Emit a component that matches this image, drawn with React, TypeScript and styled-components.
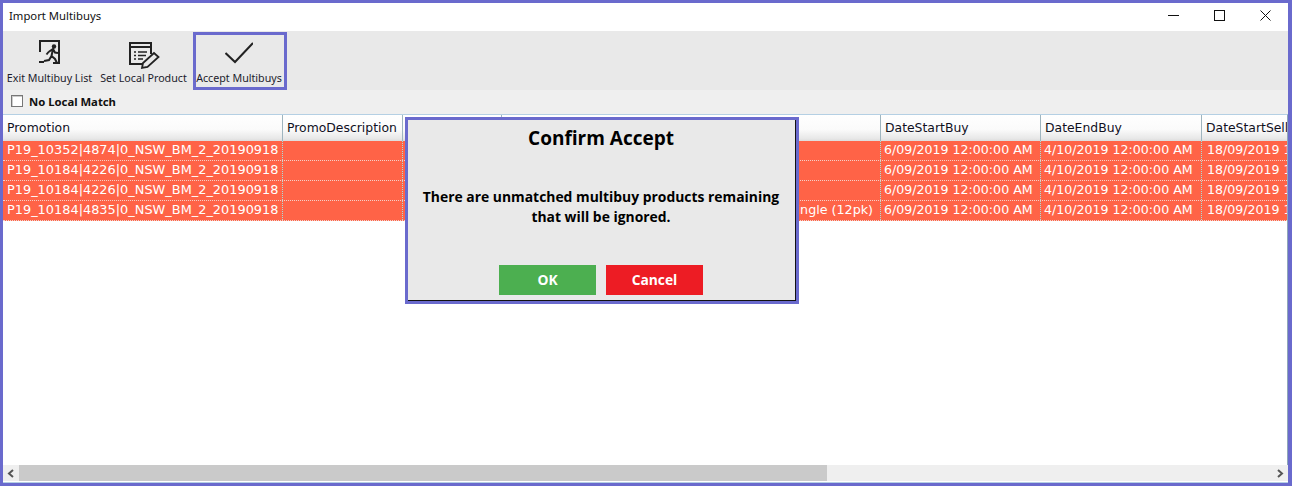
import React from "react";
import styled, { createGlobalStyle } from "styled-components";

const Global = createGlobalStyle`
  html, body { margin: 0; padding: 0; background: #fff; }
  * { box-sizing: border-box; }
`;

const Frame = styled.div`
  position: relative;
  width: 1292px;
  height: 486px;
  border: solid #6a6acd;
  border-width: 3px 4px 3px 3px;
  display: flex;
  flex-direction: column;
  background: #fff;
  overflow: hidden;
  font-family: "Noto Sans", "Open Sans", sans-serif;
`;

const TitleBar = styled.div`
  height: 28px;
  flex: none;
  display: flex;
  align-items: flex-start;
  justify-content: space-between;
  padding-left: 6px;
  font-size: 11.3px;
  line-height: 26px;
  color: #111;
`;

const WindowControls = styled.div`
  display: flex;
  align-items: center;
`;

const ControlButton = styled.div`
  width: 46px;
  height: 25px;
  display: flex;
  align-items: center;
  justify-content: center;
`;

const Toolbar = styled.div`
  height: 59px;
  flex: none;
  background: #e9e9e9;
  display: flex;
  padding-left: 2px;
`;

const ToolButton = styled.div<{ $active?: boolean; $width: number }>`
  width: ${(p) => p.$width}px;
  margin-top: 1px;
  height: 58px;
  border: 3px solid ${(p) => (p.$active ? "#6a6acd" : "transparent")};
  display: flex;
  flex-direction: column;
  align-items: center;
  padding: 5px ${(p) => (p.$active ? 2 : 0)}px 0 0;
  font-size: 10.7px;
  color: #1c1c2c;
  white-space: nowrap;
`;

const IconSlot = styled.div`
  height: 31px;
  display: flex;
  align-items: flex-start;
  justify-content: center;
`;

const ToolLabel = styled.span`
  line-height: 14px;
`;

const OptionRow = styled.div`
  height: 24px;
  flex: none;
  background: #efefef;
  display: flex;
  align-items: center;
  gap: 6px;
  padding: 0 0 2px 8px;
  font-size: 11.3px;
  font-weight: 700;
  color: #111;
`;

const Check = styled.span`
  width: 12px;
  height: 12px;
  background: #fff;
  border: 1px solid #777;
  box-shadow: inset 1px 1px 0 #ccc;
`;

const Grid = styled.div`
  flex: 1;
  min-height: 0;
  overflow: hidden;
  border-top: 1px solid #b5d0e4;
  border-right: 1px solid #8fa7b8;
  font-family: "DejaVu Sans", Verdana, sans-serif;
  font-size: 12.4px;
`;

const HeaderRow = styled.div`
  display: flex;
  height: 26px;
  background: linear-gradient(#ffffff 0%, #fbfbfb 55%, #e8e8e8 90%, #dcdcdc 100%);
  color: #10101e;
  align-items: stretch;
`;

const HeaderCell = styled.div<{ $w: number }>`
  flex: none;
  width: ${(p) => p.$w}px;
  padding: 0 0 2px 4px;
  display: flex;
  align-items: center;
  white-space: nowrap;
  overflow: hidden;
  border-right: 1px solid #9fb5bf;
`;

const DataRow = styled.div`
  display: flex;
  height: 20px;
  background: #ff6347;
  color: #fff;
  border-bottom: 1px dotted #f4d0c8;
`;

const DataCell = styled.div<{ $w: number; $pad?: number; $end?: boolean; $size?: number }>`
  flex: none;
  width: ${(p) => p.$w}px;
  padding-left: ${(p) => p.$pad ?? 3}px;
  padding-right: ${(p) => (p.$end ? 7 : 0)}px;
  text-align: ${(p) => (p.$end ? "right" : "left")};
  font-size: ${(p) => p.$size ?? 12.6}px;
  line-height: 18px;
  white-space: nowrap;
  overflow: hidden;
  border-right: 1px dotted #a9dcd8;
`;

const ScrollBar = styled.div`
  height: 16px;
  flex: none;
  background: #efefef;
  display: flex;
  align-items: stretch;
  margin-bottom: 1px;
`;

const ScrollArrow = styled.div`
  width: 16px;
  flex: none;
  display: flex;
  align-items: center;
  justify-content: center;
`;

const ScrollThumb = styled.div`
  width: 808px;
  flex: none;
  background: #cacaca;
`;

const ScrollGap = styled.div`
  flex: 1;
`;

const BottomLine = styled.div`
  height: 1px;
  flex: none;
  background: #b5d0e4;
`;

const Dialog = styled.div`
  position: absolute;
  left: 402px;
  top: 114px;
  width: 394px;
  height: 187px;
  padding-right: 2px;
  border: 3px solid #6a6acd;
  background: #e9e9e9;
  box-shadow: inset -1px -1px 0 #111;
  display: flex;
  flex-direction: column;
  align-items: center;
  font-family: "Open Sans", "Noto Sans", sans-serif;
  font-weight: 700;
  color: #000;
`;

const DialogTitle = styled.div`
  margin-top: 6px;
  font-size: 19px;
  line-height: 25px;
`;

const DialogText = styled.div`
  margin-top: 36px;
  font-size: 13.9px;
  line-height: 20px;
  text-align: center;
`;

const DialogButtons = styled.div`
  margin-top: auto;
  margin-bottom: 6px;
  display: flex;
  gap: 10px;
`;

const DialogButton = styled.div<{ $bg: string }>`
  width: 97px;
  height: 30px;
  background: ${(p) => p.$bg};
  color: #fff;
  font-size: 13.8px;
  display: flex;
  align-items: center;
  justify-content: center;
  padding-bottom: 1px;
`;

const columns = [280, 120, 99, 379, 160, 161, 86];
const headers = ["Promotion", "PromoDescription", "", "", "DateStartBuy", "DateEndBuy", "DateStartSell"];
const rows = [
  "P19_10352|4874|0_NSW_BM_2_20190918",
  "P19_10184|4226|0_NSW_BM_2_20190918",
  "P19_10184|4226|0_NSW_BM_2_20190918",
  "P19_10184|4835|0_NSW_BM_2_20190918",
];

const ExitIcon = () => (
  <svg width="22" height="30" viewBox="0 0 22 30" fill="none" stroke="#222">
    <path d="M1 12V1h19v22h-6M0 22h5" strokeWidth="2" />
    <circle cx="15" cy="6.500" r="2.200" fill="#222" stroke="none" />
    <path d="M9.500 12l4.500-3-1.500 7 3.500 3 2 4M12.500 16l-2.500 4-5 1M14 9l2 3.500 3 .5M9.500 12l-2 2.500" strokeWidth="2" />
  </svg>
);

const ProductIcon = () => (
  <svg width="32" height="30" viewBox="0 0 32 30" fill="none" stroke="#222">
    <path d="M23 14V3H2v21h12M2 7h21" strokeWidth="2" />
    <path d="M6 12h2M10 12h9M6 15.500h2M10 15.500h8M6 19h2M10 19h5" strokeWidth="1.500" />
    <path d="M14 28l1-5 11-10 4.500 4-11 10z" strokeWidth="1.800" />
  </svg>
);

const CheckIcon = () => (
  <svg width="28" height="30" viewBox="0 0 28 30" fill="none" stroke="#222" strokeWidth="2">
    <path d="M.5 13l9.500 9L28 3" />
  </svg>
);

export default function App() {
  return (
    <Frame>
      <Global />
      <TitleBar>
        Import Multibuys
        <WindowControls>
          <ControlButton>
            <svg width="11" height="11" viewBox="0 0 11 11" stroke="#111"><path d="M0 5.500h11" /></svg>
          </ControlButton>
          <ControlButton>
            <svg width="11" height="11" viewBox="0 0 11 11" fill="none" stroke="#111"><rect x=".5" y=".5" width="10" height="10" /></svg>
          </ControlButton>
          <ControlButton>
            <svg width="11" height="11" viewBox="0 0 11 11" stroke="#111"><path d="M.5.500l10 10M10.500.500l-10 10" /></svg>
          </ControlButton>
        </WindowControls>
      </TitleBar>
      <Toolbar>
        <ToolButton $width={89}><IconSlot><ExitIcon /></IconSlot><ToolLabel>Exit Multibuy List</ToolLabel></ToolButton>
        <ToolButton $width={99}><IconSlot><ProductIcon /></IconSlot><ToolLabel>Set Local Product</ToolLabel></ToolButton>
        <ToolButton $active $width={94}><IconSlot><CheckIcon /></IconSlot><ToolLabel>Accept Multibuys</ToolLabel></ToolButton>
      </Toolbar>
      <OptionRow><Check />No Local Match</OptionRow>
      <Grid>
        <HeaderRow>
          {headers.map((h, i) => <HeaderCell key={i} $w={columns[i]}>{h}</HeaderCell>)}
        </HeaderRow>
        {rows.map((r, ri) => (
          <DataRow key={ri}>
            <DataCell $w={columns[0]} $pad={4} $size={12.9}>{r}</DataCell>
            <DataCell $w={columns[1]} />
            <DataCell $w={columns[2]} />
            <DataCell $w={columns[3]} $end $size={12.7}>{ri === 3 ? "Single (12pk)" : ""}</DataCell>
            <DataCell $w={columns[4]}>6/09/2019 12:00:00 AM</DataCell>
            <DataCell $w={columns[5]}>4/10/2019 12:00:00 AM</DataCell>
            <DataCell $w={columns[6]} $pad={5}>18/09/2019 12:00:00 AM</DataCell>
          </DataRow>
        ))}
      </Grid>
      <ScrollBar>
        <ScrollArrow>
          <svg width="8" height="9" viewBox="0 0 8 9" fill="none" stroke="#555" strokeWidth="2"><path d="M6 1L2 4.500 6 8" /></svg>
        </ScrollArrow>
        <ScrollThumb />
        <ScrollGap />
        <ScrollArrow>
          <svg width="8" height="9" viewBox="0 0 8 9" fill="none" stroke="#555" strokeWidth="2"><path d="M2 1l4 3.500L2 8" /></svg>
        </ScrollArrow>
      </ScrollBar>
      <BottomLine />
      <Dialog>
        <DialogTitle>Confirm Accept</DialogTitle>
        <DialogText>There are unmatched multibuy products remaining<br />that will be ignored.</DialogText>
        <DialogButtons>
          <DialogButton $bg="#4caf50">OK</DialogButton>
          <DialogButton $bg="#ed1c24">Cancel</DialogButton>
        </DialogButtons>
      </Dialog>
    </Frame>
  );
}
